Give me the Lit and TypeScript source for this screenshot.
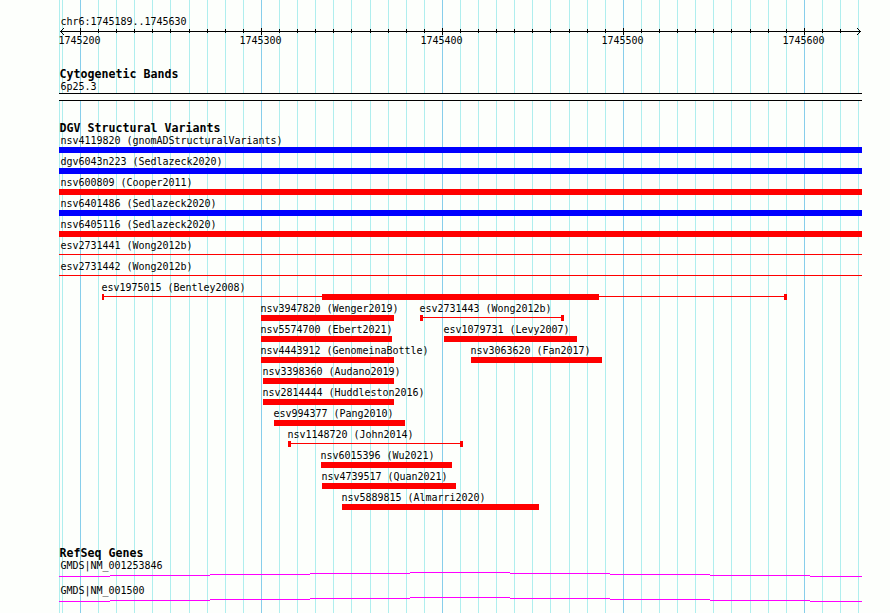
import { LitElement, html, svg, css } from "lit";
import { customElement, property } from "lit/decorators.js";

const LEFT = 59;
const RIGHT = 862;
const HEIGHT = 613;

interface Feature {
  label: string;
  start: number;
  end: number;
  color: "red" | "blue";
  /** Widths of the left and right end blocks when the body is a thin line. */
  caps?: [number, number];
  thick?: [number, number];
}

const wide = (label: string, color: "red" | "blue", caps?: [number, number]): Feature[] => [
  { label, start: LEFT, end: RIGHT, color, caps },
];
const red = (label: string, start: number, end: number, caps?: [number, number]): Feature => ({
  label, start, end, color: "red", caps,
});

const VARIANTS: Feature[][] = [
  wide("nsv4119820 (gnomADStructuralVariants)", "blue"),
  wide("dgv6043n223 (Sedlazeck2020)", "blue"),
  wide("nsv600809 (Cooper2011)", "red"),
  wide("nsv6401486 (Sedlazeck2020)", "blue"),
  wide("nsv6405116 (Sedlazeck2020)", "red"),
  wide("esv2731441 (Wong2012b)", "red", [0, 0]),
  wide("esv2731442 (Wong2012b)", "red", [0, 0]),
  [{ label: "esv1975015 (Bentley2008)", start: 102, end: 787, color: "red", caps: [2, 3], thick: [322, 599] }],
  [red("nsv3947820 (Wenger2019)", 261, 394), red("esv2731443 (Wong2012b)", 420, 564, [3, 3])],
  [red("nsv5574700 (Ebert2021)", 261, 392), red("esv1079731 (Levy2007)", 444, 577)],
  [red("nsv4443912 (GenomeinaBottle)", 261, 394), red("nsv3063620 (Fan2017)", 471, 602)],
  [red("nsv3398360 (Audano2019)", 263, 394)],
  [red("nsv2814444 (Huddleston2016)", 263, 394)],
  [red("esv994377 (Pang2010)", 274, 405)],
  [red("nsv1148720 (John2014)", 288, 463, [3, 3])],
  [red("nsv6015396 (Wu2021)", 321, 452)],
  [red("nsv4739517 (Quan2021)", 322, 456)],
  [red("nsv5889815 (Almarri2020)", 342, 539)],
];

/** Ten-base divisions; every tenth one is a major division. */
const DIVISIONS = Array.from({ length: 45 }, (_, i) => {
  const k = i - 1;
  return { x: Math.floor(80.49 + 18.095 * k), major: k % 10 === 0, base: 1745200 + k * 10 };
}).filter((d) => d.x < 861);

@customElement("variant-glyph")
class VariantGlyph extends LitElement {
  @property({ attribute: false }) feature!: Feature;

  static styles = css`
    :host { display: block; grid-area: 1 / 1; justify-self: start; }
    .label { height: 13px; line-height: 13px; white-space: pre; text-indent: -0.5px; }
    .inset { padding-left: 2px; }
    .shape { display: block; height: 6px; shape-rendering: crispEdges; overflow: visible; }
    .red { fill: #ff0000; }
    .blue { fill: #0000ff; }
  `;

  render() {
    const f = this.feature;
    const w = f.end - f.start;
    const body = f.caps === undefined
      ? svg`<rect width=${w} height="6"></rect>`
      : svg`
          <rect y="2" width=${w} height="1"></rect>
          <rect width=${f.caps[0]} height="6"></rect>
          <rect x=${w - f.caps[1]} width=${f.caps[1]} height="6"></rect>
          ${f.thick ? svg`<rect x=${f.thick[0] - f.start} width=${f.thick[1] - f.thick[0]} height="6"></rect>` : ""}`;
    return html`
      <div class="label ${f.start === LEFT ? "inset" : ""}">${f.label}</div>
      <svg class="shape ${f.color}" width=${w} height="6">${body}</svg>
    `;
  }
}

@customElement("position-ruler")
class PositionRuler extends LitElement {
  static styles = css`
    :host { display: block; height: 33px; }
    .region { height: 13px; line-height: 13px; padding-left: 2px; text-indent: -0.5px; }
    .axis { display: block; shape-rendering: crispEdges; }
    .line { fill: none; stroke: #000; stroke-width: 1; }
    .numbers { display: grid; height: 12px; line-height: 12px; }
    .number { grid-area: 1 / 1; justify-self: start; width: 42px; text-align: center; text-indent: -1px; }
  `;

  render() {
    return html`
      <div class="region">chr6:1745189..1745630</div>
      <svg class="axis" width="803" height="7" viewBox="59 28 803 7">
        <path class="line" d="M60 31.5H861"></path>
        <path class="line" d="M63.5 28V29M62.5 29V30M61.5 30V31M61.5 32V33M62.5 33V34M63.5 34V35"></path>
        <path class="line" d="M857.5 28V29M858.5 29V30M859.5 30V31M859.5 32V33M858.5 33V34M857.5 34V35"></path>
        ${DIVISIONS.filter((d) => d.x > 70 && d.x < 850).map(
          (d) => svg`<path class="line" d="M${d.x + 0.5} ${d.major ? "28V35" : "29V33"}"></path>`,
        )}
      </svg>
      <div class="numbers">
        ${DIVISIONS.filter((d) => d.major).map(
          (d) => html`<span class="number" style="margin-left:${d.x - 21 - LEFT}px">${d.base}</span>`,
        )}
      </div>
    `;
  }
}

@customElement("gene-track")
class GeneTrack extends LitElement {
  @property() name = "";

  static styles = css`
    :host { display: block; height: 25px; }
    .label { height: 13px; line-height: 13px; padding-left: 2px; text-indent: -0.5px; }
    .intron { display: block; shape-rendering: crispEdges; }
    .line { fill: none; stroke: #ff00ff; stroke-width: 1; }
  `;

  render() {
    return html`
      <div class="label">${this.name}</div>
      <svg class="intron" width="803" height="5" viewBox="59 0 803 5">
        <path class="line" d="M59 4.5H110M110 3.5H210M210 2.5H310M310 1.5H410M410 .5H510M510 1.5H610M610 2.5H710M710 3.5H810M810 4.5H862"></path>
      </svg>
    `;
  }
}

@customElement("app-root")
class AppRoot extends LitElement {
  static styles = css`
    :host {
      display: block;
      position: relative;
      box-sizing: border-box;
      width: 890px;
      height: 613px;
      overflow: hidden;
      background: #fdfffc;
      color: #000;
      font: 10px/13px "DejaVu Sans Mono", monospace;
      letter-spacing: -0.02px;
    }
    .grid { position: absolute; inset: 0; shape-rendering: crispEdges; }
    .minor { fill: #afeeee; }
    .major { fill: #87ceeb; }
    .panel {
      position: relative;
      display: flex;
      flex-direction: column;
      width: 803px;
      padding: 15px 0 0 59px;
    }
    .track { display: flex; flex-direction: column; }
    .cyto { margin-top: 20px; }
    .variants { margin-top: 21px; }
    .genes { margin-top: 35px; }
    .heading {
      height: 12px;
      margin: 0;
      font-size: 11.6px;
      line-height: 12px;
      font-weight: bold;
      letter-spacing: 0.015px;
      text-indent: 0.5px;
    }
    .bandname { height: 13px; padding-left: 2px; text-indent: -0.5px; }
    .band {
      box-sizing: border-box;
      height: 8px;
      border: solid #000;
      border-width: 1px 0;
      background: #fdfffc;
    }
    .row { display: grid; height: 21px; }
  `;

  render() {
    return html`
      <svg class="grid" width="890" height=${HEIGHT}>
        <rect class="minor" x=${LEFT} width="1" height=${HEIGHT}></rect>
        ${DIVISIONS.map(
          (d) => svg`<rect class=${d.major ? "major" : "minor"} x=${d.x} width="1" height=${HEIGHT}></rect>`,
        )}
      </svg>
      <div class="panel">
        <position-ruler></position-ruler>
        <section class="track cyto">
          <h2 class="heading">Cytogenetic Bands</h2>
          <div class="bandname">6p25.3</div>
          <div class="band"></div>
        </section>
        <section class="track variants">
          <h2 class="heading">DGV Structural Variants</h2>
          ${VARIANTS.map(
            (row) => html`<div class="row">
              ${row.map(
                (f) => html`<variant-glyph .feature=${f} style="margin-left:${f.start - LEFT}px"></variant-glyph>`,
              )}
            </div>`,
          )}
        </section>
        <section class="track genes">
          <h2 class="heading">RefSeq Genes</h2>
          <gene-track name="GMDS|NM_001253846"></gene-track>
          <gene-track name="GMDS|NM_001500"></gene-track>
        </section>
      </div>
    `;
  }
}
